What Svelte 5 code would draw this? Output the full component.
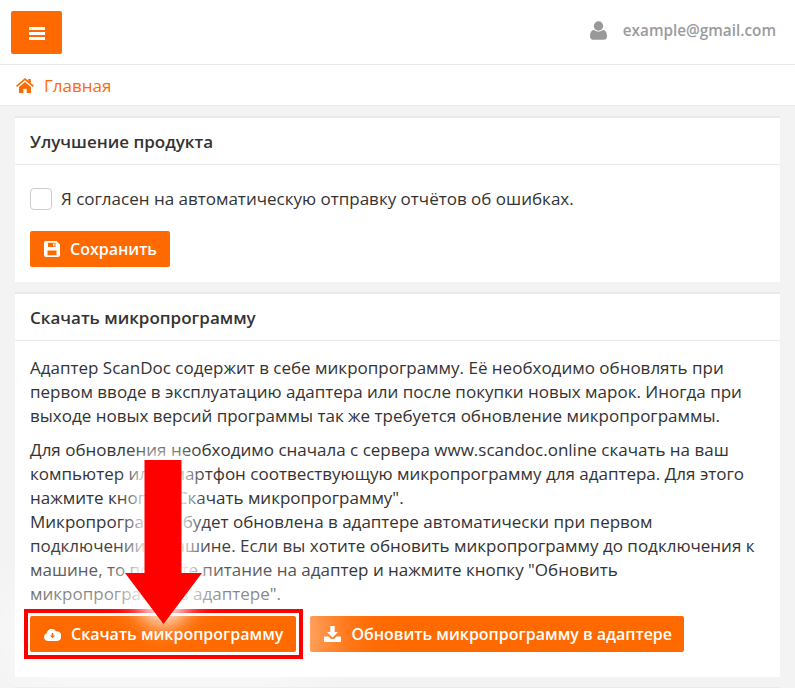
<script>
  const firmwareIntro =
    'Адаптер ScanDoc содержит в себе микропрограмму. Её необходимо обновлять при первом вводе в эксплуатацию адаптера или после покупки новых марок. Иногда при выходе новых версий программы так же требуется обновление микропрограммы.';
</script>

<div class="page">
  <header class="topbar">
    <button class="menu-btn" aria-label="Меню">
      <svg width="16" height="14" viewBox="0 0 16 14"><path d="M0 1h16v3H0zM0 6h16v3H0zM0 11h16v3H0z" fill="#fff" /></svg>
    </button>
    <div class="user">
      <svg width="17" height="19" viewBox="0 0 17 19"><circle cx="8.5" cy="5" r="4.7" fill="#999" /><path d="M0 15.500C0 11.500 1.500 9 4 9c1 .9 2.800 1.500 4.500 1.500S12 9.900 13 9c2.500 0 4 2.500 4 6.500 0 2-1.300 3.200-3 3.200H3c-1.700 0-3-1.200-3-3.200z" fill="#999" /></svg>
      <span>example@gmail.com</span>
    </div>
  </header>

  <nav class="crumbs">
    <svg width="18" height="15" viewBox="0 0 18 15"><path d="M9 0l3.200 2.700V1h2.600v3.900L18 7.700l-1 1.200-8-6.700-8 6.700-1-1.200zM3 9L9 3.900 15 9v5.400a.6.6 0 0 1-.6.6h-3.700v-4.200H7.300V15H3.600a.6.6 0 0 1-.6-.6z" fill="#ff6a00" /></svg>
    <a href="#home">Главная</a>
  </nav>

  <main class="content">
    <section class="card">
      <h2>Улучшение продукта</h2>
      <div class="card-body first">
        <label class="agree">
          <span class="check"></span>
          <span>Я согласен на автоматическую отправку отчётов об ошибках.</span>
        </label>
        <button class="btn">
          <svg width="16" height="16" viewBox="0 0 16 16"><path fill-rule="evenodd" d="M2 0h10.500L16 3.500V14a2 2 0 0 1-2 2H2a2 2 0 0 1-2-2V2a2 2 0 0 1 2-2zm2 1.800V6h7.500V1.800zm5 .5h1.500v3H9zM3.500 9.500V14.200h9V9.500z" fill="#fff" /></svg>
          Сохранить
        </button>
      </div>
    </section>

    <section class="card">
      <h2>Скачать микропрограмму</h2>
      <div class="card-body second">
        <p>{firmwareIntro}</p>
        <p>
          Для обновления необходимо сначала с сервера www.scandoc.online скачать на ваш компьютер или смартфон соотвествующую микропрограмму для адаптера. Для этого нажмите кнопку "Скачать микропрограмму".<br />
          Микропрограмма будет обновлена в адаптере автоматически при первом подключении к машине. Если вы хотите обновить микропрограмму до подключения к машине, то подайте питание на адаптер и нажмите кнопку "Обновить микропрограмму в адаптере".
        </p>
        <div class="actions">
          <button class="btn">
            <svg width="17" height="13" viewBox="0 0 17 13"><path fill-rule="evenodd" d="M4 13a4 4 0 0 1-1.200-7.800A5 5 0 0 1 12 3.300 4.800 4.800 0 0 1 13.500 13zM7.700 5v2.500H6l2.500 2.700L11 7.500H9.300V5z" fill="#fff" /></svg>
            Скачать микропрограмму
          </button>
          <button class="btn">
            <svg width="17" height="16" viewBox="0 0 17 16"><path d="M6.300 0h4.400v6H14l-5.500 5.500L3 6h3.300zM0 10.500h4.500L7 13h3l2.500-2.500H17V16H0z" fill="#fff" /></svg>
            Обновить микропрограмму в адаптере
          </button>
        </div>
      </div>
    </section>

    <section class="card stub"></section>
  </main>

  <!-- annotation drawn over the screenshot -->
  <div class="highlight"></div>
  <svg class="arrow" width="77" height="164" viewBox="0 0 77 164" aria-hidden="true">
    <path d="M19.500 0h37v113H77L38.500 164 0 113h19.500z" fill="#ff0000" />
  </svg>
</div>

<style>
  :global(body) {
    background: #f3f3f4;
    font-family: "Open Sans", sans-serif;
    color: #333;
  }

  .page {
    position: relative;
    width: 795px;
    height: 688px;
    overflow: hidden;
  }

  .topbar {
    display: flex;
    justify-content: space-between;
    align-items: center;
    height: 64px;
    padding: 0 19px 0 11px;
    background: #fff;
    border-bottom: 1px solid #e7eaec;
  }

  .menu-btn {
    display: flex;
    align-items: center;
    justify-content: center;
    width: 51px;
    height: 43px;
    margin-top: 1px;
    padding: 0;
    background: #ff6a00;
    border: none;
    border-radius: 2px;
  }

  .user {
    display: flex;
    align-items: center;
    gap: 16px;
    color: #999c9e;
    font-size: 15.3px;
    font-weight: 600;
    margin-top: -4px;
  }

  .crumbs {
    display: flex;
    align-items: center;
    gap: 10px;
    height: 40px;
    padding-left: 16px;
    background: #fff;
    border-bottom: 1px solid #e7eaec;
    font-size: 17px;
  }

  .crumbs a {
    color: #ff6a00;
    text-decoration: none;
  }

  .content {
    display: flex;
    flex-direction: column;
    gap: 10px;
    padding: 10px 15px 0;
  }

  .card {
    background: #fff;
    border-top: 2px solid #e7eaec;
  }

  .card.stub {
    height: 20px;
  }

  h2 {
    margin: 0;
    padding: 1px 15px 0;
    height: 45px;
    line-height: 46px;
    font-size: 17px;
    font-weight: 600;
    color: #333;
    border-bottom: 1px solid #e7eaec;
  }

  .card-body {
    padding: 0 15px;
  }

  .card-body.first {
    padding-top: 23px;
    padding-bottom: 15px;
  }

  .card-body.second {
    padding-top: 15px;
    padding-bottom: 25px;
  }

  .agree {
    display: flex;
    align-items: center;
    gap: 9px;
    font-size: 17px;
    line-height: 22px;
    margin-bottom: 21px;
  }

  .check {
    width: 20px;
    height: 20px;
    border: 1px solid #ccc;
    border-radius: 4px;
    background: #fff;
  }

  p {
    margin: 0 0 10px;
    font-size: 17px;
    line-height: 24px;
    color: #333;
  }

  .actions {
    display: flex;
    gap: 14px;
  }

  .btn {
    display: flex;
    align-items: center;
    gap: 10px;
    height: 36px;
    padding: 0 13px 0 14px;
    background: #ff6a00;
    border: none;
    border-radius: 2px;
    color: #fff;
    font-family: "Open Sans", sans-serif;
    font-size: 16px;
    font-weight: 600;
    white-space: nowrap;
  }

  .btn + .btn {
    padding-right: 12px;
  }

  .arrow {
    position: absolute;
    left: 125px;
    top: 460px;
    overflow: visible;
    filter: drop-shadow(0 0 12px #fff) drop-shadow(0 0 12px #fff);
  }

  .highlight {
    position: absolute;
    left: 24px;
    top: 609px;
    box-sizing: border-box;
    width: 279px;
    height: 50px;
    border: 4px solid #ff0000;
    box-shadow: 0 0 70px 10px #fff;
  }
</style>
